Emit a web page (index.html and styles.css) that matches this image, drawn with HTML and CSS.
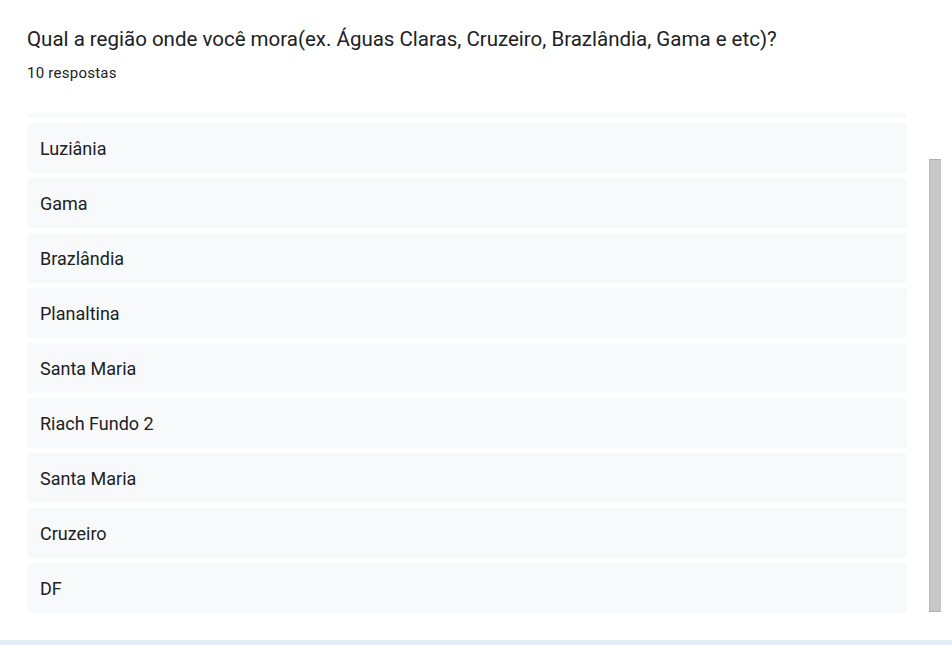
FILE: index.html
```html
<!DOCTYPE html>
<html lang="pt">
<head>
<meta charset="utf-8">
<link rel="stylesheet" href="styles.css">
</head>
<body>
<div class="page">
  <div class="card">
    <h1 class="title">Qual a região onde você mora(ex. Águas Claras, Cruzeiro, Brazlândia, Gama e etc)?</h1>
    <div class="count">10 respostas</div>
    <div class="viewport">
      <div class="list">
        <div class="item"></div>
        <div class="item">Luziânia</div>
        <div class="item">Gama</div>
        <div class="item">Brazlândia</div>
        <div class="item">Planaltina</div>
        <div class="item">Santa Maria</div>
        <div class="item">Riach Fundo 2</div>
        <div class="item">Santa Maria</div>
        <div class="item">Cruzeiro</div>
        <div class="item">DF</div>
      </div>
      <div class="thumb"></div>
    </div>
  </div>
  <div class="band"></div>
</div>
</body>
</html>
```
FILE: styles.css
```css
html, body {
  margin: 0;
  padding: 0;
  background: #ffffff;
}
body {
  font-family: Roboto, "Liberation Sans", sans-serif;
  color: #202124;
}
.page {
  height: 645px;
  display: flex;
  flex-direction: column;
  overflow: hidden;
}
.card {
  flex: 1;
  padding: 25px 0 0 27px;
}
.title {
  margin: 0;
  font-size: 20.5px;
  font-weight: 400;
  line-height: 28px;
  letter-spacing: 0;
  color: #202124;
  white-space: nowrap;
}
.count {
  margin-top: 10px;
  font-size: 15px;
  line-height: 20px;
  letter-spacing: 0.25px;
  color: #202124;
}
.viewport {
  position: relative;
  margin-top: 30px;
  height: 500px;
  overflow: hidden;
}
.list {
  width: 880px;
  margin-top: -45px;
  display: flex;
  flex-direction: column;
  gap: 5px;
}
.item {
  height: 50px;
  flex-shrink: 0;
  box-sizing: border-box;
  padding: 0 13px;
  display: flex;
  align-items: center;
  background: #f8f9fa;
  border-radius: 4px;
  font-size: 18px;
  color: #202124;
}
.thumb {
  position: absolute;
  left: 902px;
  top: 46px;
  width: 12px;
  height: 453px;
  background: #c8c8c8;
  border-left: 1px solid #b6b6b6;
  border-top: 1px solid #b0b0b0;
  border-bottom: 1px solid #b0b0b0;
  box-sizing: border-box;
}
.band {
  height: 5px;
  background: #e4eef9;
}
```
